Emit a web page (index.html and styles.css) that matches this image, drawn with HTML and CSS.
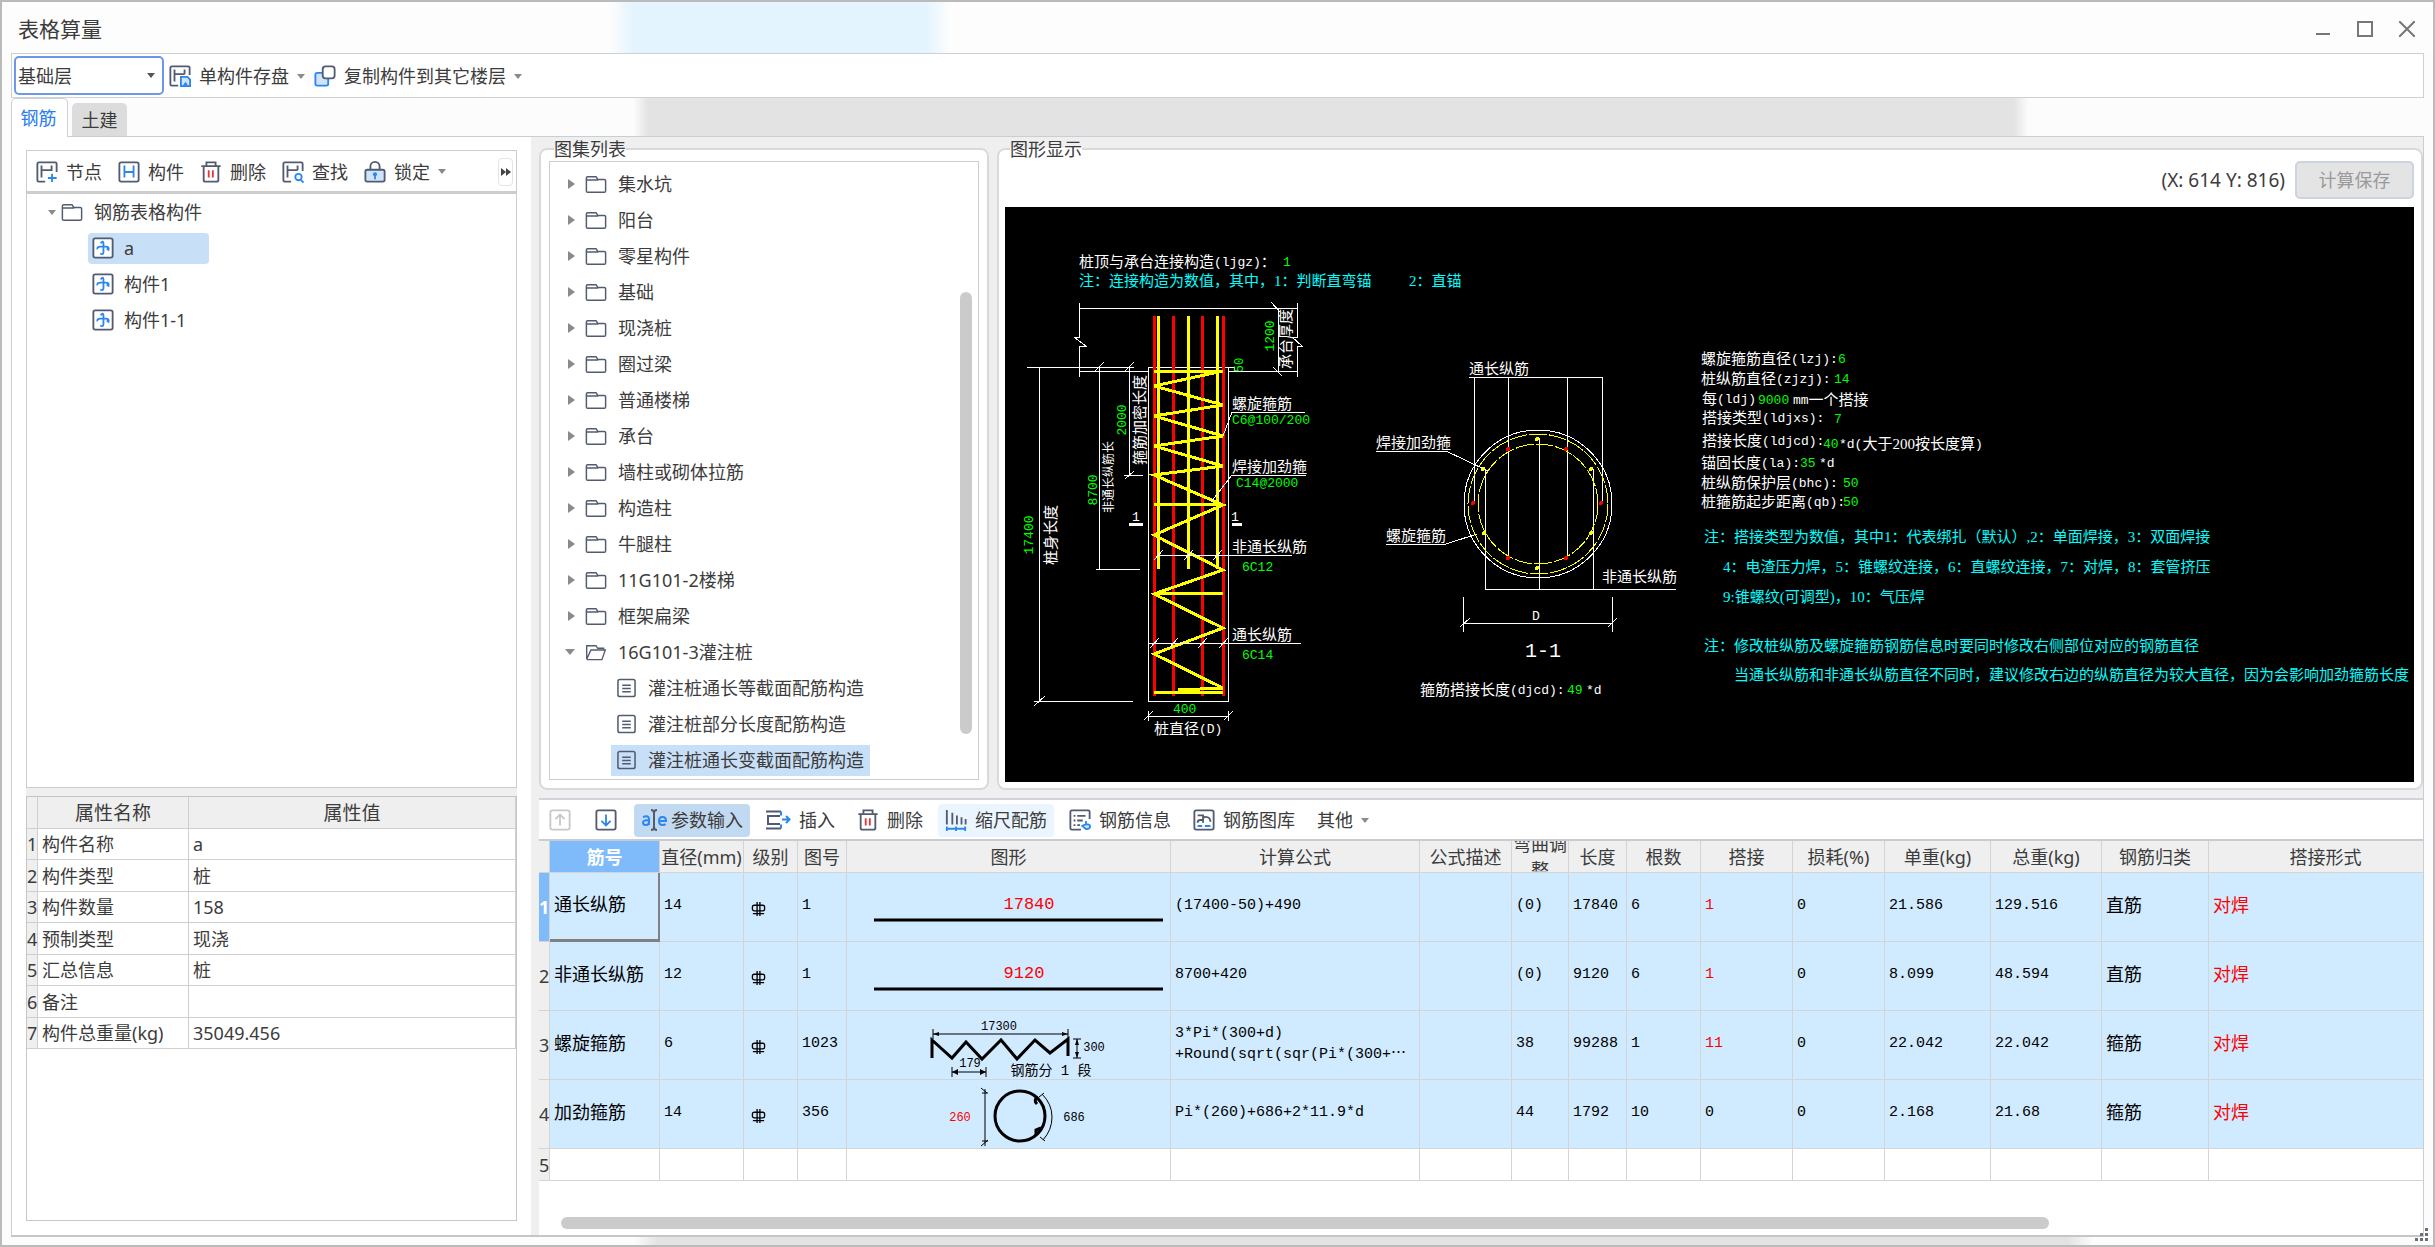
FILE: index.html
```html
<!DOCTYPE html>
<html lang="zh-CN">
<head>
    <meta charset="UTF-8">
    <meta name="viewport" content="width=device-width, initial-scale=1.0">
    <title>表格算量</title>
    <link rel="stylesheet" href="styles.css">
</head>
<body>
    <!-- Icon sprite -->
    <svg class="sprite" aria-hidden="true">
        <symbol id="i-save" viewBox="0 0 24 24">
            <path class="ln" d="M10 22.500H3A1.500 1.500 0 0 1 1.500 21V3A1.500 1.500 0 0 1 3 1.500h18A1.500 1.500 0 0 1 22.500 3v8M6 5v13M17 5v5M6 10h11"/>
            <path class="bl fill" d="M13 13h7l3 3v7H13z"/><path class="bl" d="M16 23l2-3 2 3"/>
        </symbol>
        <symbol id="i-copy" viewBox="0 0 24 24">
            <rect class="bl fill" x="1.500" y="8.500" width="14" height="14" rx="2"/>
            <rect class="ln paper" x="9.500" y="1.500" width="13" height="13" rx="3"/>
        </symbol>
        <symbol id="i-node" viewBox="0 0 24 24">
            <path class="ln" d="M10 22.500H3A1.500 1.500 0 0 1 1.500 21V3A1.500 1.500 0 0 1 3 1.500h18A1.500 1.500 0 0 1 22.500 3v9M6 5v13M17 5v6M6 10h11"/>
            <path class="bl" d="M17.500 14v9M13 18.500h9.500"/>
        </symbol>
        <symbol id="i-part" viewBox="0 0 24 24">
            <rect class="ln" x="1.500" y="1.500" width="21" height="21" rx="2"/>
            <path class="bl" d="M7 5v13M17 5v13M7 12h10"/>
        </symbol>
        <symbol id="i-trash" viewBox="0 0 24 24">
            <path class="ln" d="M1.500 5.500h21M7 5V1.500h10V5M4 6v15q0 1.500 2 1.500h12q2 0 2-1.500V6"/>
            <path class="rd" d="M9.500 10v8M14 10v8"/>
        </symbol>
        <symbol id="i-find" viewBox="0 0 24 24">
            <path class="ln" d="M10 22.500H3A1.500 1.500 0 0 1 1.500 21V3A1.500 1.500 0 0 1 3 1.500h18A1.500 1.500 0 0 1 22.500 3v8M6 5v13M17 5v5M6 10h11"/>
            <circle class="bl" cx="18" cy="17.500" r="3.500"/><path class="bl" d="M20.500 20.500l3 3"/>
        </symbol>
        <symbol id="i-lock" viewBox="0 0 24 24">
            <path class="ln" d="M7 9V6a5 5 0 0 1 10 0v3"/>
            <rect class="ln fill" x="1.500" y="9.500" width="21" height="13" rx="2"/>
            <path class="bl" d="M12 15v5"/><circle class="dot" cx="12" cy="14.500" r="2.200"/>
        </symbol>
        <symbol id="i-folder" viewBox="0 0 24 20">
            <path class="ln slim" d="M1.500 17V3q0-1.500 1.500-1.500h9l2 3h7q1.500 0 1.500 1.500v11q0 1.500-1.500 1.500H3q-1.500 0-1.500-1.500zM1.500 5h13"/>
        </symbol>
        <symbol id="i-open" viewBox="0 0 26 20">
            <path class="ln slim" d="M2 18V2h11l2 3h7v3M2 18L7 7h17l-4 11.500H2"/>
        </symbol>
        <symbol id="i-doc" viewBox="0 0 20 20">
            <rect class="ln slim" x="1" y="1" width="18" height="18" rx="2"/>
            <path class="ln slim" d="M5.500 7h9M5.500 10.500h9M5.500 14h9"/>
        </symbol>
        <symbol id="i-comp" viewBox="0 0 24 24">
            <rect class="ln paper" x="1.500" y="1.500" width="21" height="21" rx="2"/>
            <path class="bl" d="M9.500 7q3-4 3 0v9q0 4-3.500 2M6 13.500q-1-3 3-3h6q4 0 3 3.500l-2-1.500"/>
        </symbol>
        <symbol id="i-up" viewBox="0 0 24 24">
            <rect class="off" x="1.500" y="1.500" width="21" height="21" rx="2"/>
            <path class="off" d="M12 18V7M7 11l5-5 5 5"/>
        </symbol>
        <symbol id="i-down" viewBox="0 0 24 24">
            <rect class="ln" x="1.500" y="1.500" width="21" height="21" rx="2"/>
            <path class="bl" d="M12 6v11M7 13l5 5 5-5"/>
        </symbol>
        <symbol id="i-insert" viewBox="0 0 26 24">
            <path class="ln" d="M1 3.500h15M15 8H3v8h12M1 20.500h15"/>
            <path class="bl" d="M16 3.500v4M16 20.500v-4M17 11.500h7M21 8l3.500 3.500L21 15"/>
        </symbol>
        <symbol id="i-scale" viewBox="0 0 24 24">
            <path class="ln" d="M2 1v16M8 4v13M13 7v10M18 9v8M22.500 11v6"/>
            <path class="bl" d="M2 21.500h20M2 19v5M12 19v5M22 19v5"/>
        </symbol>
        <symbol id="i-info" viewBox="0 0 24 24">
            <path class="ln" d="M13 22.500H3A1.500 1.500 0 0 1 1.500 21V3A1.500 1.500 0 0 1 3 1.500h18A1.500 1.500 0 0 1 22.500 3v8M5 7.500h2M9 7.500h9M5 12.500h2M9 12.500h6M5 17.500h2M9 17.500h3"/>
            <path class="bl fill" d="M18.500 13v3.500q4.500 0 4.500 2.500t-4.500 3l-4-3.500 4-2"/>
        </symbol>
        <symbol id="i-lib" viewBox="0 0 24 24">
            <rect class="ln" x="1.500" y="1.500" width="21" height="21" rx="2"/>
            <path class="ln" d="M5 7h6v5H8q-3 0-3 3M11 15V7M11 10q2-2 5-1 3 1 3 5"/>
            <path class="bl" d="M5 18.500h5M13 18.500h6"/>
        </symbol>
        <symbol id="i-grade" viewBox="0 0 16 16">
            <rect class="ink" x="1.500" y="4.500" width="13" height="6" rx="2"/>
            <path class="ink" d="M6.500 1v15M9.500 1v15M2 13.500h12"/>
        </symbol>
    </svg>

    <div class="window">
        <header class="titlebar">
            <h1>表格算量</h1>
            <div class="controls">
                <button aria-label="最小化"><svg viewBox="0 0 16 16"><path d="M1 13h14"/></svg></button>
                <button aria-label="最大化"><svg viewBox="0 0 16 16"><rect x="1" y="1" width="14" height="14"/></svg></button>
                <button aria-label="关闭"><svg viewBox="0 0 16 16"><path d="M0 0l16 16M16 0L0 16"/></svg></button>
            </div>
        </header>

        <div class="topbar">
            <div class="combo">
                <select aria-label="楼层"><option>基础层</option></select>
            </div>
            <button class="tool"><svg class="icon"><use href="#i-save"/></svg>单构件存盘<i class="caret"></i></button>
            <button class="tool"><svg class="icon"><use href="#i-copy"/></svg>复制构件到其它楼层<i class="caret"></i></button>
        </div>

        <nav class="tabs">
            <button class="tab active">钢筋</button>
            <button class="tab">土建</button>
        </nav>

        <main class="content">
            <!-- Left side: component tree and its properties -->
            <aside class="side">
                <section class="components">
                    <div class="side-tools">
                        <button class="tool"><svg class="icon"><use href="#i-node"/></svg>节点</button>
                        <button class="tool"><svg class="icon"><use href="#i-part"/></svg>构件</button>
                        <button class="tool"><svg class="icon"><use href="#i-trash"/></svg>删除</button>
                        <button class="tool"><svg class="icon"><use href="#i-find"/></svg>查找</button>
                        <button class="tool"><svg class="icon"><use href="#i-lock"/></svg>锁定<i class="caret"></i></button>
                        <button class="more" aria-label="更多"><i></i><i></i></button>
                    </div>
                    <ul class="part-tree">
                        <li class="root"><i class="caret"></i><svg class="folder"><use href="#i-folder"/></svg>钢筋表格构件</li>
                        <li><span class="part selected"><svg class="icon"><use href="#i-comp"/></svg>a</span></li>
                        <li><span class="part"><svg class="icon"><use href="#i-comp"/></svg>构件1</span></li>
                        <li><span class="part"><svg class="icon"><use href="#i-comp"/></svg>构件1-1</span></li>
                    </ul>
                </section>
                <div class="splitter"></div>
                <section class="props">
                    <table class="prop-table">
                        <thead>
                            <tr><th class="num"></th><th class="key">属性名称</th><th>属性值</th></tr>
                        </thead>
                        <tbody>
                            <tr><th>1</th><td>构件名称</td><td>a</td></tr>
                            <tr><th>2</th><td>构件类型</td><td>桩</td></tr>
                            <tr><th>3</th><td>构件数量</td><td>158</td></tr>
                            <tr><th>4</th><td>预制类型</td><td>现浇</td></tr>
                            <tr><th>5</th><td>汇总信息</td><td>桩</td></tr>
                            <tr><th>6</th><td>备注</td><td></td></tr>
                            <tr><th>7</th><td>构件总重量(kg)</td><td>35049.456</td></tr>
                        </tbody>
                    </table>
                </section>
            </aside>

            <div class="work">
                <div class="upper">
                    <fieldset class="group atlas">
                        <legend>图集列表</legend>
                        <div class="atlas-box">
                            <ul class="atlas-tree">
                                <li><i class="arrow"></i><svg class="folder"><use href="#i-folder"/></svg>集水坑</li>
                                <li><i class="arrow"></i><svg class="folder"><use href="#i-folder"/></svg>阳台</li>
                                <li><i class="arrow"></i><svg class="folder"><use href="#i-folder"/></svg>零星构件</li>
                                <li><i class="arrow"></i><svg class="folder"><use href="#i-folder"/></svg>基础</li>
                                <li><i class="arrow"></i><svg class="folder"><use href="#i-folder"/></svg>现浇桩</li>
                                <li><i class="arrow"></i><svg class="folder"><use href="#i-folder"/></svg>圈过梁</li>
                                <li><i class="arrow"></i><svg class="folder"><use href="#i-folder"/></svg>普通楼梯</li>
                                <li><i class="arrow"></i><svg class="folder"><use href="#i-folder"/></svg>承台</li>
                                <li><i class="arrow"></i><svg class="folder"><use href="#i-folder"/></svg>墙柱或砌体拉筋</li>
                                <li><i class="arrow"></i><svg class="folder"><use href="#i-folder"/></svg>构造柱</li>
                                <li><i class="arrow"></i><svg class="folder"><use href="#i-folder"/></svg>牛腿柱</li>
                                <li><i class="arrow"></i><svg class="folder"><use href="#i-folder"/></svg>11G101-2楼梯</li>
                                <li><i class="arrow"></i><svg class="folder"><use href="#i-folder"/></svg>框架扁梁</li>
                                <li><i class="arrow down"></i><svg class="folder"><use href="#i-open"/></svg>16G101-3灌注桩</li>
                                <li class="leaf"><span><svg class="doc"><use href="#i-doc"/></svg>灌注桩通长等截面配筋构造</span></li>
                                <li class="leaf"><span><svg class="doc"><use href="#i-doc"/></svg>灌注桩部分长度配筋构造</span></li>
                                <li class="leaf"><span class="selected"><svg class="doc"><use href="#i-doc"/></svg>灌注桩通长变截面配筋构造</span></li>
                            </ul>
                            <div class="vscroll"></div>
                        </div>
                    </fieldset>

                    <fieldset class="group drawing">
                        <legend>图形显示</legend>
                        <div class="draw-bar">
                            <span>(X: 614 Y: 816)</span>
                            <button class="save" disabled>计算保存</button>
                        </div>
                        <svg class="cad" viewBox="0 0 1409 575" preserveAspectRatio="xMinYMin meet">
                            <!-- Pile cap and pile outline -->
                            <g class="w">
                                <path d="M74 101H292M74 96V130H69L81 139H74V170M292 96V130H287L297 139H292V170"/>
                                <path d="M22 160H129M74 164H143M223 164H292M143 160H223V494H143ZM223 160H229V164"/>
                                <path d="M34 160V494M29 494H128M94 160V362M91 362H135M124 160V268M119 268H138M273 101V164"/>
                                <path d="M29 499L40 489M89 165L99 155M119 165L129 155M120 272L129 264M266 95L275 105M268 160L277 169"/>
                                <path d="M143 509H223M143 504V514M223 504V514M139 513L148 504M219 513L228 504"/>
                            </g>
                            <g class="r">
                                <path d="M149 109V489M168 109V489M197 109V489M218 109V489"/>
                            </g>
                            <g class="y">
                                <path d="M153 109V362M183 109V362M212 109V362"/>
                                <path d="M149 164H218L149 179L218 198L149 209L218 229L149 239L218 259L149 268L218 298L149 328L218 363L149 387L218 421L149 447L218 481L173 483"/>
                                <path d="M149 297H218M149 386H218M149 485H218"/>
                            </g>
                            <!-- Leaders of the pile -->
                            <g class="w">
                                <path d="M218 229L227 205H300M206 295L227 268H301M152 348H287M143 436H296"/>
                                <path d="M149 353L158 343M179 353L188 343M208 353L217 343M145 441L154 431M164 441L173 431M193 441L202 431M214 441L223 431"/>
                                <path class="thick" d="M124 317H138M227 317H237"/>
                            </g>
                            <!-- Section 1-1 -->
                            <g class="w">
                                <circle cx="533" cy="297" r="74"/>
                                <path d="M464 170H597M469 170V296M503 170V351M562 170V351M597 170V296"/>
                                <path d="M534 231V382M480 262V382M588 262V382M480 382H671"/>
                                <path d="M371 244H441L483 264M381 337H441L472 327"/>
                                <path d="M458 390V425M607 390V425M458 416H607M455 420L465 411M603 420L612 411"/>
                            </g>
                            <g class="ring">
                                <circle cx="533" cy="297" r="70"/>
                                <circle cx="533" cy="297" r="60"/>
                            </g>
                            <g class="pt-r">
                                <circle cx="468" cy="296" r="2"/><circle cx="503" cy="242" r="2"/><circle cx="561" cy="242" r="2"/>
                                <circle cx="596" cy="296" r="2"/><circle cx="503" cy="351" r="2"/><circle cx="561" cy="351" r="2"/>
                            </g>
                            <g class="pt-y">
                                <circle cx="532" cy="232" r="2"/><circle cx="478" cy="262" r="2"/><circle cx="586" cy="262" r="2"/>
                                <circle cx="479" cy="326" r="2"/><circle cx="586" cy="326" r="2"/><circle cx="532" cy="361" r="2"/>
                            </g>
                            <!-- Labels -->
                            <g class="label">
                                <text x="74" y="55">桩顶与承台连接构造<tspan class="m">(ljgz)</tspan>：</text>
                                <text x="227" y="197">螺旋箍筋</text>
                                <text x="227" y="260">焊接加劲箍</text>
                                <text x="227" y="340">非通长纵筋</text>
                                <text x="227" y="428">通长纵筋</text>
                                <text class="m" x="127" y="310">1</text>
                                <text class="m" x="226" y="310">1</text>
                                <text x="149" y="522">桩直径<tspan class="m">(D)</tspan></text>
                                <text class="c" x="281" y="132" transform="rotate(-90 281 132)">承台厚度</text>
                                <text class="c" x="135" y="213" transform="rotate(-90 135 213)">箍筋加密长度</text>
                                <text class="c sm" x="104" y="270" transform="rotate(-90 104 270)">非通长纵筋长</text>
                                <text class="c" x="46" y="328" transform="rotate(-90 46 328)">桩身长度</text>
                                <text x="464" y="162">通长纵筋</text>
                                <text x="371" y="236">焊接加劲箍</text>
                                <text x="381" y="329">螺旋箍筋</text>
                                <text x="597" y="370">非通长纵筋</text>
                                <text class="m c" x="531" y="409">D</text>
                                <text class="big c" x="538" y="444">1-1</text>
                                <text x="415" y="483">箍筋搭接长度<tspan class="m">(djcd):</tspan></text>
                                <text class="m" x="581" y="483">*d</text>
                                <text x="696" y="152">螺旋箍筋直径<tspan class="m">(lzj):</tspan></text>
                                <text x="696" y="172">桩纵筋直径<tspan class="m">(zjzj):</tspan></text>
                                <text x="697" y="192">每<tspan class="m">(ldj)</tspan></text>
                                <text x="788" y="193"><tspan class="m">mm</tspan>一个搭接</text>
                                <text x="697" y="211">搭接类型<tspan class="m">(ldjxs):</tspan></text>
                                <text x="697" y="234">搭接长度<tspan class="m">(ldjcd):</tspan></text>
                                <text x="834" y="237"><tspan class="m">*d(</tspan>大于200按长度算<tspan class="m">)</tspan></text>
                                <text x="696" y="256">锚固长度<tspan class="m">(la):</tspan></text>
                                <text class="m" x="814" y="256">*d</text>
                                <text x="696" y="276">桩纵筋保护层<tspan class="m">(bhc):</tspan></text>
                                <text x="696" y="295">桩箍筋起步距离<tspan class="m">(qb):</tspan></text>
                            </g>
                            <g class="value">
                                <text x="278" y="55">1</text>
                                <text x="227" y="213">C6@100/200</text>
                                <text x="231" y="276">C14@2000</text>
                                <text x="237" y="360">6C12</text>
                                <text x="237" y="448">6C14</text>
                                <text x="168" y="502">400</text>
                                <text class="c" x="265" y="129" transform="rotate(-90 265 129)">1200</text>
                                <text class="c sm" x="235" y="158" transform="rotate(-90 235 158)">50</text>
                                <text class="c" x="117" y="213" transform="rotate(-90 117 213)">2000</text>
                                <text class="c" x="88" y="283" transform="rotate(-90 88 283)">8700</text>
                                <text class="c" x="24" y="328" transform="rotate(-90 24 328)">17400</text>
                                <text x="562" y="483">49</text>
                                <text x="833" y="152">6</text>
                                <text x="829" y="172">14</text>
                                <text x="753" y="193">9000</text>
                                <text x="829" y="212">7</text>
                                <text x="818" y="237">40</text>
                                <text x="795" y="256">35</text>
                                <text x="838" y="276">50</text>
                                <text x="838" y="295">50</text>
                            </g>
                            <g class="note">
                                <text x="74" y="74">注：连接构造为数值，其中，1：判断直弯锚</text>
                                <text x="404" y="74">2：直锚</text>
                                <text x="699" y="330">注：搭接类型为数值，其中1：代表绑扎（默认）,2：单面焊接，3：双面焊接</text>
                                <text x="718" y="360">4：电渣压力焊，5：锥螺纹连接，6：直螺纹连接，7：对焊，8：套管挤压</text>
                                <text x="718" y="390">9:锥螺纹(可调型)，10：气压焊</text>
                                <text x="699" y="439">注：修改桩纵筋及螺旋箍筋钢筋信息时要同时修改右侧部位对应的钢筋直径</text>
                                <text x="729" y="468">当通长纵筋和非通长纵筋直径不同时，建议修改右边的纵筋直径为较大直径，因为会影响加劲箍筋长度</text>
                            </g>
                        </svg>
                    </fieldset>
                </div>

                <section class="lower">
                    <div class="bar-tools">
                        <button class="tool only" disabled aria-label="上移"><svg class="icon"><use href="#i-up"/></svg></button>
                        <button class="tool only" aria-label="下移"><svg class="icon"><use href="#i-down"/></svg></button>
                        <button class="tool pressed">
                            <svg class="icon wide" viewBox="0 0 26 24">
                                <path class="bl" d="M2 9q6-2 6 2v6M8 12q-6 0-6 2.500t3 2.500 3-3M18 13h7q0-4-3.500-4T18 13t3.500 4q2 0 3-1"/>
                                <path class="ln" d="M10 2q3 0 3 3 0-3 3-3M13 5v14M10 22q3 0 3-3 0 3 3 3"/>
                            </svg>参数输入
                        </button>
                        <button class="tool"><svg class="icon wide"><use href="#i-insert"/></svg>插入</button>
                        <button class="tool"><svg class="icon"><use href="#i-trash"/></svg>删除</button>
                        <button class="tool hover"><svg class="icon"><use href="#i-scale"/></svg>缩尺配筋</button>
                        <button class="tool"><svg class="icon"><use href="#i-info"/></svg>钢筋信息</button>
                        <button class="tool"><svg class="icon"><use href="#i-lib"/></svg>钢筋图库</button>
                        <button class="tool">其他<i class="caret"></i></button>
                    </div>
                    <table class="rebar">
                        <colgroup>
                            <col class="c-num"><col class="c-name"><col class="c-dia"><col class="c-grade"><col class="c-fig">
                            <col class="c-shape"><col class="c-formula"><col class="c-desc"><col class="c-bend"><col class="c-len">
                            <col class="c-count"><col class="c-lap"><col class="c-loss"><col class="c-unit"><col class="c-total">
                            <col class="c-class"><col>
                        </colgroup>
                        <thead>
                            <tr>
                                <th></th><th class="current">筋号</th><th>直径(mm)</th><th>级别</th><th>图号</th><th>图形</th>
                                <th>计算公式</th><th>公式描述</th><th><div class="clip">弯曲调整</div></th><th>长度</th><th>根数</th>
                                <th>搭接</th><th>损耗(%)</th><th>单重(kg)</th><th>总重(kg)</th><th>钢筋归类</th><th>搭接形式</th>
                            </tr>
                        </thead>
                        <tbody>
                            <tr>
                                <th class="current">1</th><td class="cn focus">通长纵筋</td><td>14</td>
                                <td><svg class="grade"><use href="#i-grade"/></svg></td><td>1</td>
                                <td class="shape">
                                    <svg viewBox="0 0 323 68"><text class="red lg" x="182" y="31">17840</text><path class="bar" d="M27 47H316"/></svg>
                                </td>
                                <td>(17400-50)+490</td><td></td><td>(0)</td><td>17840</td><td>6</td><td class="red">1</td><td>0</td>
                                <td>21.586</td><td>129.516</td><td class="cn">直筋</td><td class="cn red">对焊</td>
                            </tr>
                            <tr>
                                <th>2</th><td class="cn">非通长纵筋</td><td>12</td>
                                <td><svg class="grade"><use href="#i-grade"/></svg></td><td>1</td>
                                <td class="shape">
                                    <svg viewBox="0 0 323 68"><text class="red lg" x="177" y="31">9120</text><path class="bar" d="M27 47H316"/></svg>
                                </td>
                                <td>8700+420</td><td></td><td>(0)</td><td>9120</td><td>6</td><td class="red">1</td><td>0</td>
                                <td>8.099</td><td>48.594</td><td class="cn">直筋</td><td class="cn red">对焊</td>
                            </tr>
                            <tr>
                                <th>3</th><td class="cn">螺旋箍筋</td><td>6</td>
                                <td><svg class="grade"><use href="#i-grade"/></svg></td><td>1023</td>
                                <td class="shape">
                                    <svg viewBox="0 0 323 68">
                                        <text x="152" y="16">17300</text><text x="247" y="37">300</text><text x="123" y="53">179</text>
                                        <text class="zh" x="204" y="60">钢筋分 1 段</text>
                                        <path class="dim" d="M86 23H221M86 18V28M221 18V28M105 61H139M105 56V66M139 56V66M230 28V47M226 28H234M226 47H234"/>
                                        <path class="tip" d="M86 23l6-2v4zM221 23l-6-2v4zM105 61l6-3v6zM139 61l-6-3v6zM230 28l-2 6h4zM230 47l-2-6h4z"/>
                                        <path class="bar" d="M85 47V29L105 47L119 31L135 48L154 29L170 48L188 29L203 42L221 28V45"/>
                                    </svg>
                                </td>
                                <td>3*Pi*(300+d)<br>+Round(sqrt(sqr(Pi*(300+⋯</td><td></td><td>38</td><td>99288</td><td>1</td><td class="red">11</td><td>0</td>
                                <td>22.042</td><td>22.042</td><td class="cn">箍筋</td><td class="cn red">对焊</td>
                            </tr>
                            <tr>
                                <th>4</th><td class="cn">加劲箍筋</td><td>14</td>
                                <td><svg class="grade"><use href="#i-grade"/></svg></td><td>356</td>
                                <td class="shape">
                                    <svg viewBox="0 0 323 68">
                                        <text class="red" x="113" y="38">260</text><text x="227" y="38">686</text>
                                        <path class="dim" d="M138 9V66M134 8L140 13M135 13H141M134 66L141 60M135 61H141"/>
                                        <path class="dim" d="M195 14Q205 24 205 37T196 60M192 17L197 13M193 57L198 61"/>
                                        <circle class="bar" cx="173" cy="36" r="25"/>
                                        <path class="bar" d="M191 17q-5 3-1 7M194 48l-5 2 0 5"/>
                                    </svg>
                                </td>
                                <td>Pi*(260)+686+2*11.9*d</td><td></td><td>44</td><td>1792</td><td>10</td><td>0</td><td>0</td>
                                <td>2.168</td><td>21.68</td><td class="cn">箍筋</td><td class="cn red">对焊</td>
                            </tr>
                            <tr class="empty">
                                <th>5</th><td></td><td></td><td></td><td></td><td></td><td></td><td></td><td></td><td></td>
                                <td></td><td></td><td></td><td></td><td></td><td></td><td></td>
                            </tr>
                        </tbody>
                    </table>
                    <div class="hscroll"></div>
                </section>
            </div>
        </main>
        <svg class="grip" viewBox="0 0 14 14"><path d="M10 0h3v3h-3zM5 5h3v3H5zM10 5h3v3h-3zM0 10h3v3H0zM5 10h3v3H5zM10 10h3v3h-3z"/></svg>
    </div>
</body>
</html>
```
FILE: styles.css
```css
* {
    box-sizing: border-box;
}

body {
    margin: 0;
    font-family: "Noto Sans", "Noto Sans CJK SC", sans-serif;
    font-size: 18px;
    line-height: 24px;
    color: #3c3c3c;
}

button, select {
    font: inherit;
    color: inherit;
    background: none;
    border: none;
    margin: 0;
    padding: 0;
}

ul {
    list-style: none;
    margin: 0;
    padding: 0;
}

.sprite {
    position: absolute;
    width: 0;
    height: 0;
}

/* Icon strokes */
.ln, .bl, .rd, .off, .ink {
    fill: none;
    stroke: #525b70;
    stroke-width: 2;
}

.slim { stroke-width: 1.6; }
.bl { stroke: #2b86f0; }
.rd { stroke: #e5343c; }
.off { stroke: #c8c8c8; }
.ink { stroke: #000; stroke-width: 1.4; }
.fill { fill: #cfe3fb; }
.paper { fill: #fff; }
.dot { fill: #2b86f0; }

.icon {
    width: 22px;
    height: 24px;
    flex: none;
}

.icon.wide {
    width: 26px;
}

.caret {
    border: 4px solid transparent;
    border-top: 5px solid #8a8a8a;
    border-bottom: none;
    flex: none;
}

.window {
    position: relative;
    display: flex;
    flex-direction: column;
    min-height: 100vh;
    padding: 0 9px 8px;
    border: 2px solid #bababa;
    background: linear-gradient(90deg, #fcfcfc 26%, #e3e3e3 27%, #e3e3e3 85%, #fcfcfc 86%);
}

.titlebar {
    display: flex;
    align-items: center;
    justify-content: space-between;
    height: 51px;
    margin: 0 -9px;
    padding: 2px 18px 0 16px;
    background: linear-gradient(90deg, #fdfdfd 25%, #e3f4fe 26%, #e3f4fe 38%, #fdfdfd 39%);
}

.titlebar h1 {
    margin: 0;
    font-size: 21px;
    font-weight: normal;
}

.controls {
    display: flex;
    gap: 26px;
}

.controls svg {
    display: block;
    width: 16px;
    height: 16px;
    fill: none;
    stroke: #777;
    stroke-width: 2;
}

.topbar {
    display: flex;
    align-items: center;
    height: 45px;
    padding-left: 2px;
    border: 1px solid #cbd1d8;
    background: #fff;
}

.tool {
    display: flex;
    align-items: center;
    gap: 8px;
    white-space: nowrap;
}

.topbar .tool {
    margin-left: 5px;
    padding-top: 1px;
}

.topbar .caret {
    margin-right: 4px;
}

.combo {
    position: relative;
}

.combo select {
    display: block;
    width: 150px;
    height: 39px;
    padding-left: 2px;
    border: 2px solid #6d97e8;
    border-radius: 5px;
    background: #fff;
    appearance: none;
}

.combo::after {
    content: "";
    position: absolute;
    right: 9px;
    top: 17px;
    border: 4px solid transparent;
    border-top: 5px solid #555;
    border-bottom: none;
}

.tabs {
    display: flex;
    align-items: flex-end;
    gap: 4px;
    height: 38px;
    background: linear-gradient(90deg, #fcfcfc 25.8%, #e3e3e3 26.4%, #e3e3e3 83%, #fcfcfc 83.6%);
}

.tab {
    height: 33px;
    width: 55px;
    border-radius: 5px 5px 0 0;
    background: #dcdcdc;
}

.tab.active {
    position: relative;
    width: 57px;
    height: 39px;
    margin-bottom: -1px;
    padding-right: 2px;
    border: 1px solid #cbd1d8;
    border-bottom: none;
    background: #fff;
    color: #2a7cf0;
}

.content {
    display: flex;
    flex: 1;
    border: 1px solid #c6ced6;
    border-bottom: 2px solid #c3c7cc;
    background: #fff;
}

/* Left side */
.side {
    display: flex;
    flex-direction: column;
    flex: 0 0 527px;
    padding: 13px 14px 14px;
    border-right: 8px solid #efefef;
}

.components {
    flex: 3 1 0;
    border: 1px solid #c9cdd1;
}

.side-tools {
    display: flex;
    align-items: center;
    gap: 16px;
    height: 43px;
    padding: 1px 3px 0 9px;
    border-bottom: 3px solid #cdcdcd;
}

.more {
    display: flex;
    align-items: center;
    justify-content: center;
    width: 15px;
    height: 28px;
    margin-left: auto;
    border: 1px solid #e4e4e4;
    border-radius: 4px;
}

.more i {
    border: 4px solid transparent;
    border-left: 5px solid #444;
    border-right: none;
}

.part-tree li {
    display: flex;
    align-items: center;
    height: 36px;
    padding-left: 61px;
}

.part-tree .root {
    gap: 5px;
    padding-left: 21px;
}

.root .folder {
    margin-right: 6px;
}

.part {
    display: flex;
    align-items: center;
    gap: 10px;
    height: 31px;
    padding: 0 4px;
}

.part.selected {
    width: 121px;
    border-radius: 4px;
    background: #c8dff8;
}

.folder {
    width: 22px;
    height: 19px;
    flex: none;
}

.splitter {
    height: 8px;
    background: #efefef;
}

.props {
    flex: 2 1 0;
    border: 1px solid #c6c6c6;
    border-top: none;
}

.prop-table {
    width: 100%;
    border-spacing: 0;
    table-layout: fixed;
    border-top: 1px solid #c4c4c4;
}

.prop-table th, .prop-table td {
    height: 31px;
    padding: 0;
    border-right: 1px solid #cfcfcf;
    border-bottom: 1px solid #cfcfcf;
    font-weight: normal;
}

.prop-table th {
    background: #efefef;
}

.prop-table thead th {
    height: 32px;
    font-size: 19px;
}

.prop-table tr:nth-child(even) td {
    height: 32px;
}

.prop-table td {
    padding-left: 4px;
}

.num { width: 11px; }
.key { width: 151px; }

/* Upper right: atlas list and drawing */
.work {
    display: flex;
    flex-direction: column;
    flex: 1;
    min-width: 0;
    background: #efefef;
}

.upper {
    display: flex;
    gap: 8px;
}

.group {
    display: flex;
    flex-direction: column;
    min-width: 0;
    margin: 0;
    border: 2px solid #d9d9d9;
    border-radius: 8px;
    background: #fff;
}

.group legend {
    margin-left: 5px;
    padding: 0;
}

.atlas {
    flex: 0 0 450px;
    padding: 0 8px 8px;
}

.drawing {
    flex: 1;
    padding: 0 7px 6px 6px;
}

.atlas-box {
    position: relative;
    height: 619px;
    padding-top: 4px;
    border: 1px solid #c9cdd1;
}

.atlas-tree li {
    display: flex;
    align-items: center;
    height: 36px;
    padding-left: 18px;
}

.arrow {
    width: 7px;
    border: 5px solid transparent;
    border-left: 7px solid #8a8a8a;
    border-right: none;
    margin-right: 10px;
    flex: none;
}

.arrow.down {
    width: 10px;
    margin: 0 10px 0 -3px;
    border: 5px solid transparent;
    border-top: 6px solid #8a8a8a;
    border-bottom: none;
}

.atlas-tree .folder {
    margin-right: 11px;
}

.atlas-tree .leaf {
    padding-left: 61px;
}

.leaf span {
    display: flex;
    align-items: center;
    gap: 12px;
    height: 31px;
    padding: 0 6px;
}

.leaf .selected {
    background: #c8dff8;
}

.doc {
    width: 19px;
    height: 20px;
}

.vscroll {
    position: absolute;
    right: 6px;
    top: 130px;
    width: 12px;
    height: 442px;
    border-radius: 6px;
    background: #cbcbcb;
}

.draw-bar {
    display: flex;
    align-items: center;
    justify-content: flex-end;
    gap: 10px;
    margin-bottom: 8px;
}

.draw-bar span {
    font-size: 19px;
}

.save {
    width: 119px;
    height: 38px;
    border: 2px solid #cdd3e0;
    border-radius: 5px;
    background: #e4e4e4;
    color: #9a9a9a;
}

/* Drawing canvas */
.cad {
    display: block;
    width: 100%;
    flex: 1;
    min-height: 0;
    background: #000;
    fill: none;
    shape-rendering: crispEdges;
}

.cad .w { stroke: #fff; }
.cad .r { stroke: #f00; stroke-width: 3; }
.cad .y { stroke: #ff0; stroke-width: 3; }
.cad .thick { stroke-width: 3; }
.cad .ring { stroke: #ff0; stroke-dasharray: 18 2; }
.cad .pt-r { fill: #f00; }
.cad .pt-y { fill: #ff0; }

.cad text {
    font-family: "Liberation Serif", "Noto Sans CJK SC", serif;
    font-size: 15px;
    dominant-baseline: central;
}

.cad .label { fill: #fff; }
.cad .value { fill: #0f0; }
.cad .note { fill: #0ff; }

.cad .m, .cad .value text {
    font-family: "Liberation Mono", monospace;
    font-size: 13px;
}

.cad text.c { text-anchor: middle; }
.cad text.sm { font-size: 12px; }

.cad text.big {
    font-family: "Liberation Mono", monospace;
    font-size: 20px;
}

/* Lower right: rebar table */
.lower {
    flex: 1;
    margin-top: 8px;
    border-top: 2px solid #d0d4da;
    background: #fff;
    overflow: hidden;
}

.bar-tools {
    display: flex;
    align-items: center;
    height: 41px;
    padding: 1px 0 0 10px;
    border-bottom: 2px solid #c8ccd0;
}

.bar-tools .tool {
    gap: 8px;
    height: 33px;
    padding: 0 7px;
    margin-right: 8px;
    border-radius: 4px;
}

.bar-tools .only {
    padding: 0;
    margin-right: 24px;
}

.bar-tools .only + .pressed {
    margin-left: -7px;
}

.bar-tools .pressed {
    gap: 4px;
    background: #c2d9f2;
}

.bar-tools .hover {
    background: #ebf5ff;
}

/* The last column runs on past the visible edge */
.rebar {
    width: calc(100% + 20px);
    table-layout: fixed;
    border-spacing: 0;
    color: #000;
}

.rebar th, .rebar td {
    height: 69px;
    padding: 0;
    border-right: 1px solid #d4d4d4;
    border-bottom: 1px solid #d4d4d4;
    white-space: nowrap;
}

.rebar th {
    background: #efefef;
    color: #3c3c3c;
    font-weight: normal;
}

.rebar thead th, .rebar .empty th, .rebar .empty td {
    height: 32px;
}

.rebar td {
    padding: 0 0 3px 4px;
    background: #d0eaff;
    font-family: "Liberation Mono", "Noto Sans CJK SC", monospace;
    font-size: 15px;
    line-height: 21px;
}

.rebar .empty td {
    background: #fff;
}

.rebar td.cn {
    padding-bottom: 0;
    font-size: 18px;
}

.rebar .red {
    color: #f00;
    fill: #f00;
}

.rebar th.current {
    background: #7fbafa;
    color: #fff;
    font-weight: bold;
}

.rebar td.focus {
    border-right: 2px solid #808080;
    border-bottom: 3px solid #808080;
}

.rebar td.shape {
    padding: 0;
}

.shape svg {
    display: block;
    width: 100%;
    height: 68px;
}

.shape text {
    font-size: 12px;
    text-anchor: middle;
    dominant-baseline: central;
}

.shape text.lg { font-size: 17px; }
.shape text.zh { font-size: 14px; }

.shape .bar, .shape .dim {
    fill: none;
    stroke: #000;
    stroke-width: 3;
}

.shape .dim { stroke-width: 1; }

.grade {
    display: block;
    width: 15px;
    height: 15px;
    margin: 6px 0 0 3px;
}

.clip {
    height: 31px;
    display: flex;
    align-items: center;
    justify-content: center;
    overflow: hidden;
    line-height: 26px;
    white-space: normal;
}

.c-num { width: 11px; }
.c-name { width: 110px; }
.c-dia { width: 84px; }
.c-grade { width: 54px; }
.c-fig { width: 49px; }
.c-shape { width: 324px; }
.c-formula { width: 249px; }
.c-desc { width: 92px; }
.c-bend { width: 57px; }
.c-len { width: 58px; }
.c-count { width: 74px; }
.c-lap, .c-loss { width: 92px; }
.c-unit { width: 106px; }
.c-total { width: 111px; }
.c-class { width: 107px; }

.hscroll {
    width: 79%;
    height: 12px;
    margin: 36px 0 0 22px;
    border-radius: 6px;
    background: #cbcbcb;
}

.grip {
    position: absolute;
    right: 4px;
    bottom: 3px;
    width: 14px;
    height: 14px;
    fill: #6b7078;
}
```
